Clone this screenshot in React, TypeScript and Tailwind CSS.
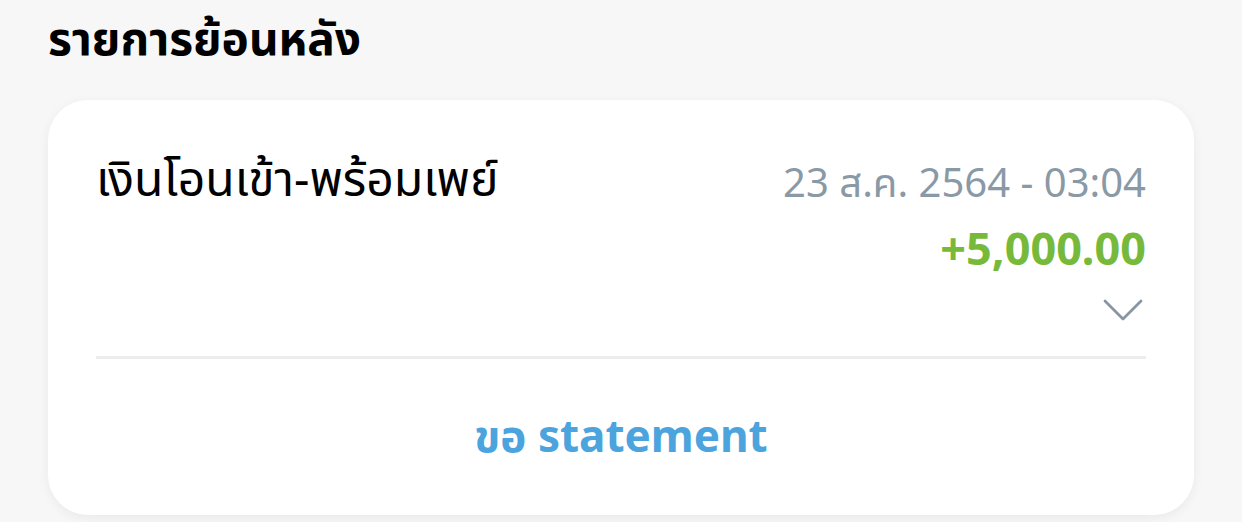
import React from 'react';

const thai = "font-['Noto_Sans','Noto_Sans_Thai','DejaVu_Sans',sans-serif]";

const ChevronDown: React.FC = () => (
  <svg width="40" height="24" viewBox="0 0 40 24" fill="none">
    <path d="M2 2 L20 20 L38 2" stroke="#8896a3" strokeWidth="2.8" strokeLinecap="round" strokeLinejoin="round" />
  </svg>
);

const App: React.FC = () => {
  return (
    <div className={`w-[1242px] h-[522px] overflow-hidden bg-[#f7f7f8] px-12 pt-[9px] ${thai}`}>
      <h2 className="text-[46px] leading-[56px] font-bold text-black">รายการย้อนหลัง</h2>

      <div className="mt-[35px] bg-white rounded-[40px] shadow-[0_3px_12px_rgba(0,0,0,0.06)] px-12 pt-[58px] pb-[54px]">
        <div className="flex justify-between items-start">
          <div className="-mt-[4px] text-[48px] leading-[48px] text-black">เงินโอนเข้า-พร้อมเพย์</div>
          <div className="flex flex-col items-end">
            <div className="text-[40px] leading-[48px] text-[#8a99a6]">23 ส.ค. 2564 - 03:04</div>
            <div className="mt-[18px] text-[45px] leading-[48px] font-bold text-[#77b93a]">+5,000.00</div>
            <div className="mt-[27px] mr-[3px]">
              <ChevronDown />
            </div>
          </div>
        </div>

        <div className="mt-[33px] h-[3px] bg-[#ededed]" />

        <div className="mt-[50px] text-center text-[44px] leading-[52px] font-bold text-[#4ba4dd]">
          ขอ statement
        </div>
      </div>
    </div>
  );
};

export default App;
